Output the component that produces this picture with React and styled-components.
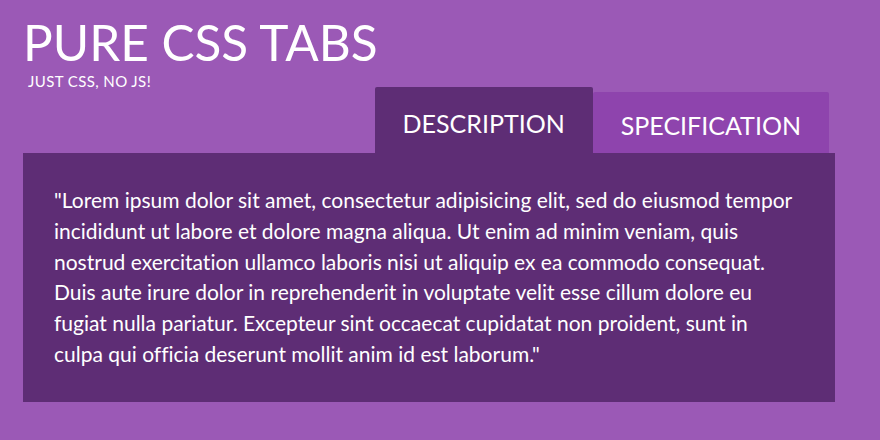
import React from "react";
import styled, { createGlobalStyle } from "styled-components";

const GlobalStyle = createGlobalStyle`
  html, body {
    margin: 0;
    padding: 0;
    background: #9b59b6;
  }
  body {
    font-family: Lato, "Open Sans", "Liberation Sans", sans-serif;
    font-variant-ligatures: no-common-ligatures;
    color: #fff;
  }
`;

const Page = styled.div`
  width: 880px;
  height: 440px;
  box-sizing: border-box;
  padding: 18px 45px 0 23px;
  overflow: hidden;
`;

const Title = styled.h1`
  margin: 0;
  font-size: 49.5px;
  line-height: 49px;
  font-weight: 400;
`;

const Subtitle = styled.p`
  margin: 7px 0 0 5px;
  font-size: 15px;
  line-height: 14px;
  font-weight: 400;
  letter-spacing: 0.4px;
`;

const TabBar = styled.div`
  display: flex;
  justify-content: flex-end;
  align-items: flex-end;
  padding-right: 6px;
  margin-top: -1px;
`;

const Tab = styled.div`
  font-size: 25px;
  line-height: 25px;
  padding: ${(p) => (p.active ? "24px 28px 17px" : "21px 28px 15px")};
  background: ${(p) => (p.active ? "#5e2d75" : "#8e44ad")};
  border-radius: 2px 2px 0 0;
  cursor: pointer;
`;

const Panel = styled.div`
  background: #5e2d75;
  padding: 32px 20px 32px 31px;
`;

const Text = styled.p`
  margin: 0;
  font-size: 21px;
  line-height: 30.8px;
`;

const lines = [
  '"Lorem ipsum dolor sit amet, consectetur adipisicing elit, sed do eiusmod tempor',
  "incididunt ut labore et dolore magna aliqua. Ut enim ad minim veniam, quis",
  "nostrud exercitation ullamco laboris nisi ut aliquip ex ea commodo consequat.",
  "Duis aute irure dolor in reprehenderit in voluptate velit esse cillum dolore eu",
  "fugiat nulla pariatur. Excepteur sint occaecat cupidatat non proident, sunt in",
  'culpa qui officia deserunt mollit anim id est laborum."',
];

const App = () => {
  return (
    <Page>
      <GlobalStyle />
      <Title>PURE CSS TABS</Title>
      <Subtitle>JUST CSS, NO JS!</Subtitle>
      <TabBar>
        <Tab active>DESCRIPTION</Tab>
        <Tab>SPECIFICATION</Tab>
      </TabBar>
      <Panel>
        <Text>
          {lines.map((line, i) => (
            <React.Fragment key={i}>
              {line}
              {i < lines.length - 1 && <br />}
            </React.Fragment>
          ))}
        </Text>
      </Panel>
    </Page>
  );
};

export default App;
